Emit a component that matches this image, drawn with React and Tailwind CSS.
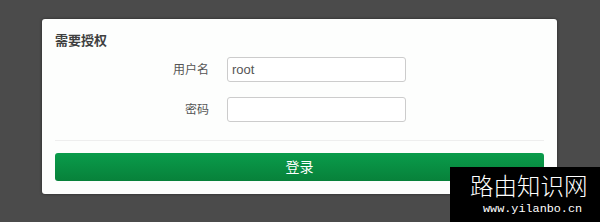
export default function App() {
  return (
    <div className="relative h-[222px] w-[600px] overflow-hidden bg-[#4b4b4b] pl-[42px] pt-[19px] font-['Liberation_Sans','Noto_Sans_CJK_SC',sans-serif]">
      {/* 登录卡片 */}
      <div className="w-[515px] rounded-[3px] bg-[#fdfefd] px-[13px] pb-[13px] pt-[12px] shadow-[0_0_3px_rgba(0,0,0,0.5)]">
        <h2 className="h-[20px] text-[13px] font-bold leading-[20px] text-[#404040]">需要授权</h2>

        <div className="mt-[6px] flex flex-col gap-[15px]">
          <div className="flex items-center">
            <label className="w-[154px] text-right text-[12px] text-[#555]">用户名</label>
            <input
              className="ml-[18px] h-[25px] w-[179px] rounded-[3px] border border-[#ccc] bg-white px-[4px] text-[13px] text-[#555] outline-none"
              defaultValue="root"
            />
          </div>
          <div className="flex items-center">
            <label className="w-[154px] text-right text-[12px] text-[#555]">密码</label>
            <input
              type="password"
              className="ml-[18px] h-[25px] w-[179px] rounded-[3px] border border-[#ccc] bg-white px-[4px] text-[13px] outline-none"
            />
          </div>
        </div>

        <div className="mt-[18px] h-px bg-[#eeeeee]" />

        <button className="mt-[12px] flex h-[28px] w-full items-center justify-center rounded-[3px] bg-gradient-to-b from-[#0a9c4b] to-[#07813a] text-[14px] text-white">
          登录
        </button>
      </div>

      {/* 水印 */}
      <div className="absolute bottom-0 right-0 h-[55px] w-[150px] bg-black pl-[20px] pt-[1px] text-white">
        <div className="text-[23.5px] leading-[34px] font-['Noto_Sans_CJK_SC',serif] font-light">路由知识网</div>
        <div className="ml-[13px] text-[11.8px] leading-[14px] font-['Liberation_Mono',monospace]">www.yilanbo.cn</div>
      </div>
    </div>
  );
}
